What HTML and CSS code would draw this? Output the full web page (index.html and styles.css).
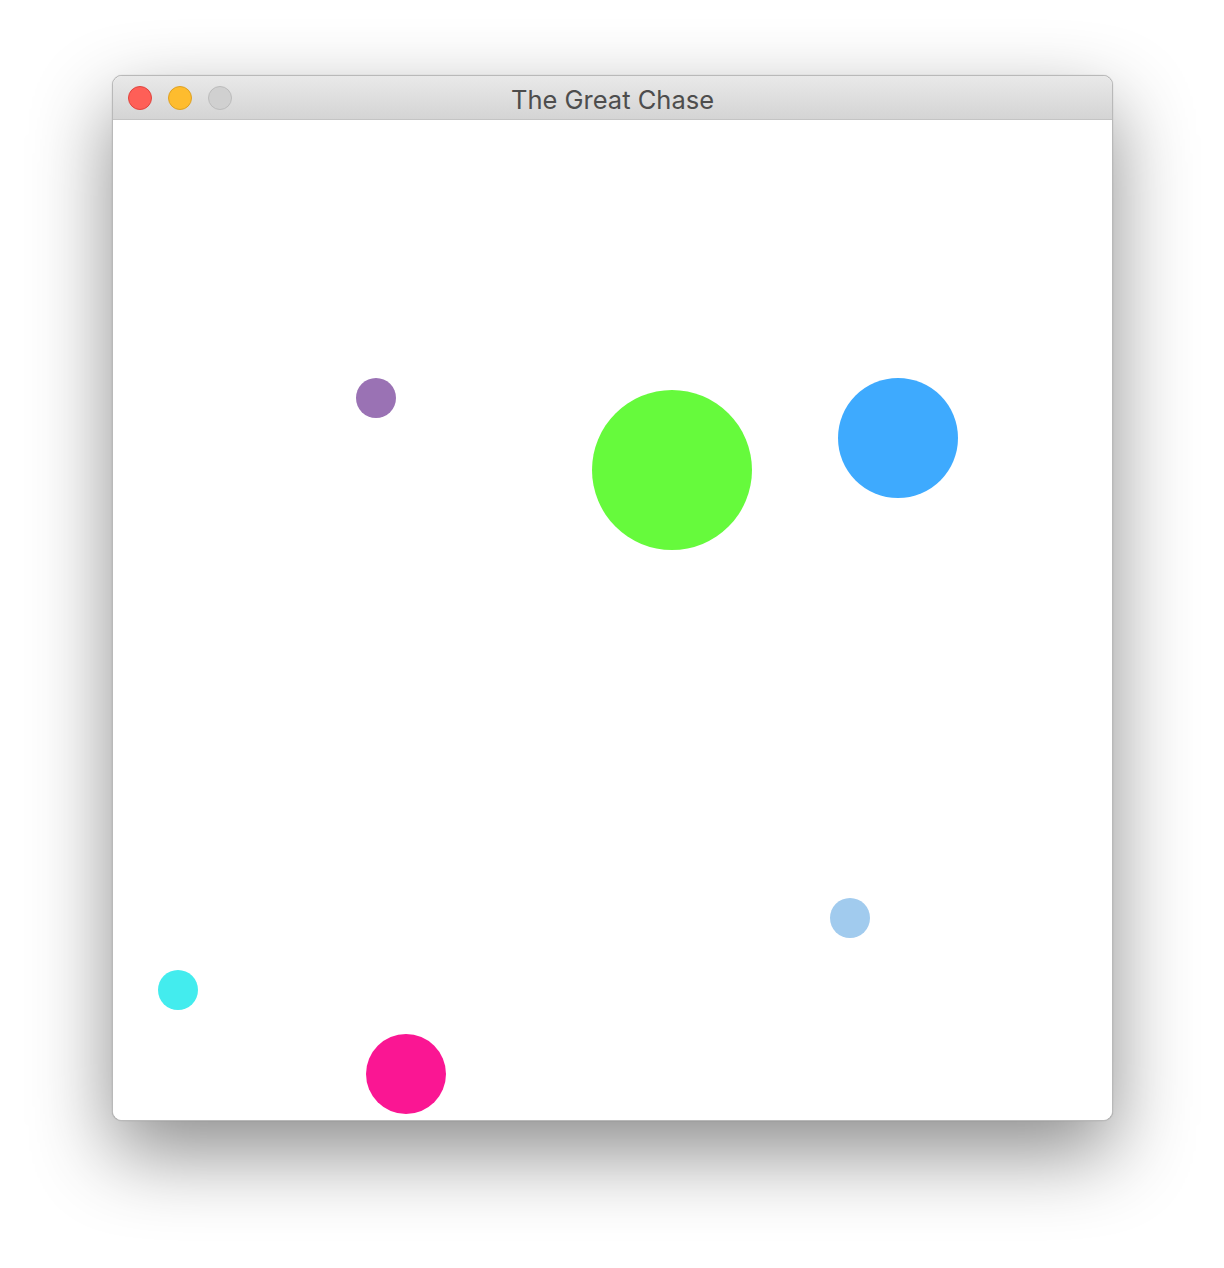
FILE: index.html
```html
<!DOCTYPE html>
<html>
<head>
<meta charset="utf-8">
<link rel="stylesheet" href="styles.css">
</head>
<body>
<div class="stage">
  <div class="window">
    <div class="titlebar">
      <div class="lights">
        <span class="light red"></span>
        <span class="light yellow"></span>
        <span class="light grey"></span>
      </div>
      <div class="title">The Great Chase</div>
    </div>
    <div class="canvas">
      <span class="ball purple" style="left:243px;top:258px;width:40px;height:40px"></span>
      <span class="ball green" style="left:479px;top:270px;width:160px;height:160px"></span>
      <span class="ball blue" style="left:725px;top:258px;width:120px;height:120px"></span>
      <span class="ball lightblue" style="left:717px;top:778px;width:40px;height:40px"></span>
      <span class="ball cyan" style="left:45px;top:850px;width:40px;height:40px"></span>
      <span class="ball pink" style="left:253px;top:914px;width:80px;height:80px"></span>
    </div>
  </div>
</div>
</body>
</html>
```

FILE: styles.css
```css
html, body {
  margin: 0;
  padding: 0;
  background: #ffffff;
}
.stage {
  padding: 75px 0 0 112px;
  height: 1268px;
  box-sizing: border-box;
}
.window {
  width: 1001px;
  box-sizing: border-box;
  border-radius: 10px;
  overflow: hidden;
  border: 1px solid #b9b9b9;
  box-shadow: 0 32px 80px rgba(0, 0, 0, 0.45), 0 0 1px rgba(0,0,0,0.3);
  background: #fff;
}
.titlebar {
  position: relative;
  height: 43px;
  background: linear-gradient(#e9e9e9, #d4d4d4);
  border-bottom: 1px solid #c4c4c4;
  display: flex;
  align-items: center;
  justify-content: center;
}
.lights {
  position: absolute;
  left: 15px;
  top: 10px;
  display: flex;
  gap: 16px;
}
.light {
  width: 24px;
  height: 24px;
  border-radius: 50%;
  box-sizing: border-box;
}
.red { background: #fe5f57; border: 1px solid #e0443e; }
.yellow { background: #febc2e; border: 1px solid #dea123; }
.grey { background: #d0d0d0; border: 1px solid #bcbcbc; }
.title {
  font-family: "Inter", sans-serif;
  font-size: 25.5px;
  color: #4d4d4d;
  padding-top: 3px;
}
.canvas {
  position: relative;
  height: 1000px;
  background: #fff;
}
.ball {
  position: absolute;
  border-radius: 50%;
}
.purple { background: #9a72b4; }
.green { background: #66fa3c; }
.blue { background: #3eaafe; }
.lightblue { background: #a1cbee; }
.cyan { background: #43ecee; }
.pink { background: #fa1693; }
```
